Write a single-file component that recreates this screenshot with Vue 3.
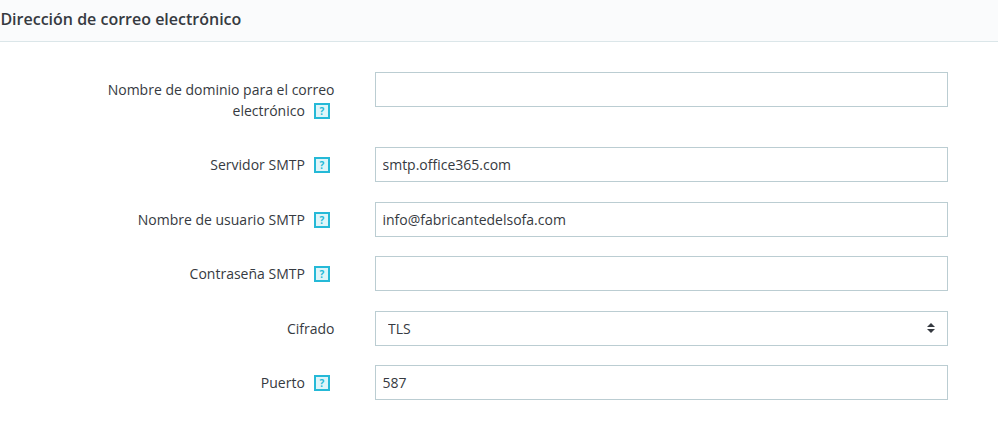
<template>
  <section class="mail-panel">
    <h3 class="panel-header">Dirección de correo electrónico</h3>

    <form class="panel-body" @submit.prevent>
      <div v-for="field in fields" :key="field.id" class="form-row">
        <label class="form-label" :for="field.id">
          {{ field.label }}
          <span v-if="field.help" class="help-box">?</span>
        </label>

        <!-- select -->
        <div v-if="field.options" class="select-wrap">
          <select :id="field.id" v-model="field.value" class="form-input form-select">
            <option v-for="option in field.options" :key="option" :value="option">{{ option }}</option>
          </select>
          <svg class="select-arrow" width="8" height="10" viewBox="0 0 8 10">
            <path d="M4 0 L8 4 H0 Z M0 6 H8 L4 10 Z" fill="#363a41" />
          </svg>
        </div>

        <!-- input -->
        <input v-else :id="field.id" v-model="field.value" :type="field.type || 'text'" class="form-input" autocomplete="off" />
      </div>
    </form>
  </section>
</template>

<script setup>
import { ref } from 'vue';

const fields = ref([
  { id: 'domain', label: 'Nombre de dominio para el correo electrónico', value: '', help: true },
  { id: 'server', label: 'Servidor SMTP', value: 'smtp.office365.com', help: true },
  { id: 'user', label: 'Nombre de usuario SMTP', value: 'info@fabricantedelsofa.com', help: true },
  { id: 'password', label: 'Contraseña SMTP', value: '', type: 'password', help: true },
  { id: 'encryption', label: 'Cifrado', value: 'TLS', options: ['Ninguno', 'TLS', 'SSL'] },
  { id: 'port', label: 'Puerto', value: '587', help: true },
]);
</script>

<style>
body {
  margin: 0;
  background: #fff;
}
</style>

<style scoped>
.mail-panel {
  min-height: 424px;
  font-family: "Open Sans", "Noto Sans", sans-serif;
  font-size: 14px;
  line-height: 21px;
  color: #363a41;
  overflow: hidden;
}

.panel-header {
  box-sizing: border-box;
  height: 42px;
  margin: 0;
  padding: 8px 0 0 0.4px;
  background: #fafbfc;
  border-bottom: 1px solid #dbe6e9;
  font-size: 16px;
  font-weight: 600;
  line-height: 22px;
}

.panel-body {
  padding: 30px 50px 0 90px;
}

.form-row {
  display: flex;
  align-items: flex-start;
  margin-bottom: 19.5px;
}

.form-label {
  box-sizing: border-box;
  width: 244.5px;
  margin-right: 40.5px;
  padding-top: 7px;
  text-align: right;
}

.form-row:first-child .form-label {
  padding-bottom: 6.7px;
}

.help-box {
  display: inline-block;
  box-sizing: border-box;
  width: 16px;
  height: 16px;
  margin: 0 4.5px 0 5.5px;
  border: 2px solid #25b9d7;
  background: #dff5f9;
  color: #25b9d7;
  font-size: 10px;
  font-weight: 700;
  line-height: 12px;
  text-align: center;
  vertical-align: 1.1px;
  cursor: pointer;
}

.select-wrap {
  position: relative;
  flex: 1;
}

.form-input {
  box-sizing: border-box;
  flex: 1;
  width: 100%;
  height: 35px;
  margin: 0;
  padding: 6px 7px 6px 6.5px;
  border: 1px solid #bbcdd2;
  border-radius: 0;
  background: #fff;
  color: #363a41;
  font: inherit;
}

.form-input:focus {
  outline: none;
  border-color: #25b9d7;
}

.form-select {
  display: block;
  padding: 6px 12px;
  appearance: none;
}

.select-arrow {
  position: absolute;
  top: 12px;
  right: 13px;
  pointer-events: none;
}
</style>
